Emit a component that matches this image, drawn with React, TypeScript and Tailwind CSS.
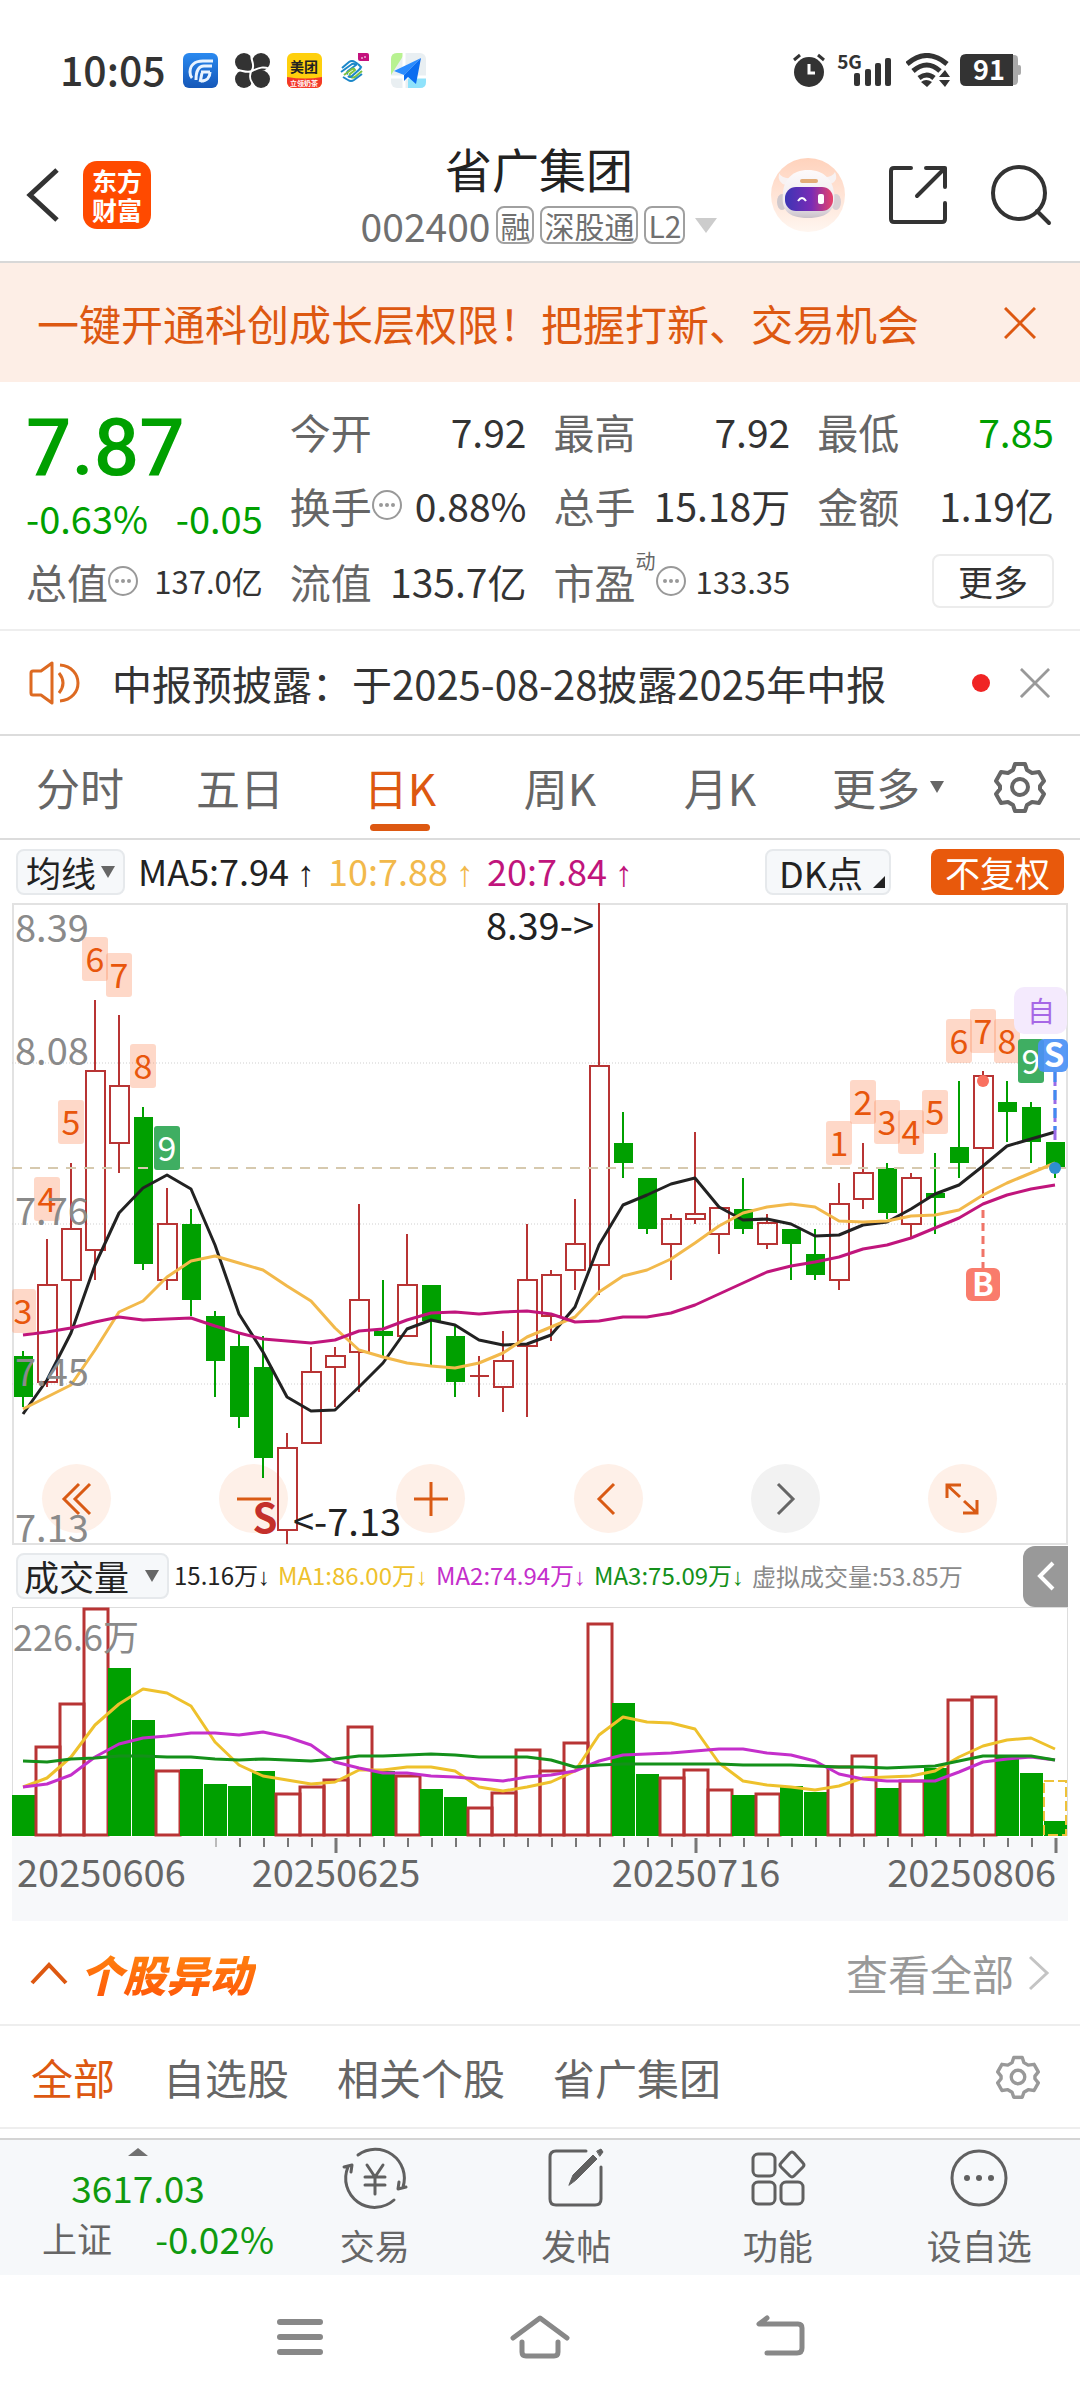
import React from "react";

type Candle = { up: boolean; high: number; top: number; bottom: number; low: number; vol: number };

const FIRST_X = 23;
const STEP = 24;
const RED = "#b83434";
const GREEN = "#00a000";

const cx = (i: number) => FIRST_X + STEP * i;

// [direction, high, body top, body bottom, low, volume top]
const rows: [number, number, number, number, number, number][] = [
  [0, 1351, 1356, 1397, 1407, 1796],
  [1, 1239, 1285, 1382, 1387, 1747],
  [1, 1163, 1229, 1280, 1330, 1704],
  [1, 1000, 1071, 1250, 1280, 1609],
  [1, 1015, 1086, 1143, 1173, 1669],
  [0, 1107, 1117, 1264, 1270, 1721],
  [1, 1188, 1224, 1280, 1290, 1771],
  [0, 1209, 1224, 1300, 1316, 1770],
  [0, 1311, 1316, 1361, 1397, 1785],
  [0, 1333, 1346, 1417, 1428, 1787],
  [0, 1336, 1367, 1458, 1478, 1772],
  [1, 1433, 1448, 1530, 1544, 1794],
  [1, 1347, 1372, 1443, 1443, 1787],
  [1, 1347, 1356, 1367, 1407, 1780],
  [1, 1204, 1300, 1352, 1392, 1727],
  [0, 1280, 1331, 1336, 1356, 1772],
  [1, 1234, 1285, 1336, 1336, 1776],
  [0, 1285, 1285, 1321, 1365, 1790],
  [0, 1325, 1336, 1382, 1397, 1798],
  [1, 1356, 1376, 1376, 1397, 1808],
  [1, 1331, 1361, 1387, 1412, 1793],
  [1, 1224, 1280, 1346, 1417, 1750],
  [1, 1270, 1275, 1316, 1341, 1771],
  [1, 1199, 1244, 1270, 1290, 1743],
  [1, 903, 1066, 1265, 1295, 1624],
  [0, 1112, 1143, 1163, 1178, 1704],
  [0, 1178, 1178, 1229, 1234, 1775],
  [1, 1214, 1219, 1244, 1280, 1778],
  [1, 1132, 1214, 1219, 1224, 1770],
  [1, 1208, 1208, 1234, 1254, 1790],
  [0, 1178, 1209, 1229, 1234, 1796],
  [1, 1214, 1223, 1244, 1249, 1794],
  [0, 1229, 1229, 1244, 1280, 1787],
  [0, 1229, 1254, 1275, 1280, 1793],
  [1, 1183, 1204, 1280, 1290, 1767],
  [1, 1143, 1173, 1199, 1209, 1756],
  [0, 1163, 1168, 1213, 1219, 1789],
  [1, 1173, 1178, 1224, 1237, 1781],
  [0, 1153, 1193, 1198, 1234, 1769],
  [0, 1081, 1147, 1163, 1178, 1700],
  [1, 1071, 1076, 1148, 1198, 1697],
  [0, 1081, 1102, 1112, 1142, 1758],
  [0, 1102, 1107, 1142, 1163, 1774],
  [0, 1142, 1142, 1167, 1178, 1822],
];

const candles: Candle[] = rows.map(([d, high, top, bottom, low, vol]) => ({ up: d === 1, high, top, bottom, low, vol }));

// Days whose volume bar takes the opposite colour of the price candle.
const flippedVolume = new Set([4, 39]);

const ma5 = [1414, 1380, 1333, 1265, 1213, 1188, 1175, 1189, 1245, 1314, 1352, 1397, 1411, 1410, 1387, 1363, 1329, 1320, 1325, 1340, 1345, 1344, 1335, 1307, 1245, 1205, 1195, 1184, 1178, 1207, 1220, 1219, 1224, 1236, 1235, 1225, 1222, 1209, 1194, 1185, 1166, 1146, 1139, 1132];
const ma10 = [1409, 1397, 1385, 1350, 1312, 1301, 1277, 1261, 1256, 1263, 1270, 1286, 1301, 1328, 1350, 1357, 1363, 1366, 1368, 1363, 1353, 1337, 1327, 1317, 1292, 1276, 1270, 1259, 1243, 1226, 1213, 1207, 1204, 1207, 1221, 1222, 1221, 1216, 1215, 1210, 1195, 1183, 1173, 1163];
const ma20 = [1335, 1332, 1328, 1322, 1317, 1320, 1319, 1318, 1326, 1333, 1339, 1341, 1343, 1340, 1331, 1329, 1320, 1313, 1312, 1314, 1312, 1311, 1314, 1322, 1321, 1317, 1317, 1313, 1305, 1294, 1283, 1272, 1266, 1262, 1257, 1249, 1245, 1238, 1228, 1218, 1204, 1195, 1189, 1185];
const vma1 = [1788, 1779, 1758, 1726, 1705, 1690, 1694, 1707, 1743, 1766, 1777, 1781, 1785, 1783, 1771, 1771, 1768, 1768, 1772, 1788, 1792, 1788, 1783, 1772, 1736, 1718, 1723, 1724, 1730, 1764, 1782, 1786, 1788, 1791, 1787, 1779, 1778, 1777, 1772, 1758, 1747, 1741, 1739, 1750];
const vma2 = [1788, 1785, 1776, 1758, 1745, 1739, 1737, 1734, 1734, 1736, 1733, 1738, 1746, 1763, 1769, 1774, 1774, 1777, 1778, 1780, 1782, 1778, 1776, 1772, 1762, 1756, 1755, 1754, 1752, 1750, 1750, 1754, 1756, 1762, 1775, 1780, 1782, 1782, 1782, 1773, 1763, 1760, 1758, 1761];
const vma3 = [1762, 1763, 1760, 1759, 1757, 1757, 1758, 1758, 1760, 1761, 1760, 1761, 1762, 1760, 1757, 1757, 1756, 1755, 1756, 1758, 1758, 1758, 1761, 1768, 1766, 1765, 1765, 1765, 1765, 1765, 1766, 1766, 1766, 1767, 1768, 1768, 1769, 1768, 1767, 1762, 1757, 1757, 1757, 1761];

const toPoints = (ys: number[]) => ys.map((y, i) => `${cx(i)},${y}`).join(" ");

const marks: [number, string, number][] = [
  [0, "3", 1289], [1, "4", 1177], [2, "5", 1100], [3, "6", 937], [4, "7", 953], [5, "8", 1044], [6, "9", 1126],
  [34, "1", 1121], [35, "2", 1080], [36, "3", 1100], [37, "4", 1110], [38, "5", 1090], [39, "6", 1019], [40, "7", 1009], [41, "8", 1019], [42, "9", 1039],
];

function PriceChart() {
  return (
    <svg viewBox="12 903 1056 642" className="pointer-events-none relative block h-auto w-full overflow-visible" role="img" aria-label="日K线图">
      {[1063, 1224, 1384].map((y) => (
        <line key={y} x1="12" x2="1068" y1={y} y2={y} stroke="#cfcfcf" strokeWidth="1" strokeDasharray="1 2" />
      ))}
      {candles.map((c, i) => {
        const x = cx(i);
        const col = c.up ? RED : GREEN;
        return (
          <g key={i} stroke={col} strokeWidth="2">
            {c.high < c.top && <line x1={x} x2={x} y1={c.high} y2={c.top} />}
            {c.low > c.bottom && <line x1={x} x2={x} y1={c.bottom} y2={c.low} />}
            {c.up ? (
              c.top === c.bottom ? <line x1={x - 9} x2={x + 10} y1={c.top} y2={c.top} /> : <rect x={x - 9} y={c.top} width="19" height={c.bottom - c.top} fill="none" />
            ) : (
              <rect x={x - 9} y={c.top} width="19" height={c.bottom - c.top} fill={col} stroke="none" />
            )}
          </g>
        );
      })}
      <line x1="12" x2="1068" y1="1168" y2="1168" stroke="#d6c9ae" strokeWidth="2" strokeDasharray="10 8" />
      <g fill="none" strokeWidth="3" strokeLinejoin="round">
        <polyline points={toPoints(ma5)} stroke="#222222" />
        <polyline points={toPoints(ma10)} stroke="#f2b94b" />
        <polyline points={toPoints(ma20)} stroke="#c0157c" />
      </g>
      <g textAnchor="middle">
        {marks.map(([i, t, y]) => (
          <g key={`${i}-${t}`}>
            <rect x={Math.max(12, cx(i) - 13)} y={y} width={i === 0 ? 24 : 26} height="44" rx="3" fill={t === "9" ? "#3fae62" : "#fb8a58"} fillOpacity={t === "9" ? 1 : 0.33} />
            <text x={cx(i)} y={y + 35} fill={t === "9" ? "#ffffff" : "#e8560c"} fontSize="34">{t}</text>
          </g>
        ))}
      </g>
      <rect x="1014" y="987" width="53" height="47" rx="10" fill="#f4eafd" />
      <text x="1041" y="1022" fontSize="28" textAnchor="middle" fill="#a768e6">自</text>
      <line x1="1055" x2="1055" y1="1072" y2="1142" stroke="#9a6be8" strokeWidth="3" strokeDasharray="14 4" />
      <line x1="1055" x2="1055" y1="1072" y2="1130" stroke="#3f8cf0" strokeWidth="3" strokeDasharray="10 8" />
      <rect x="1038" y="1039" width="30" height="33" rx="6" fill="#4a90f5" fillOpacity="0.92" />
      <text x="1054" y="1067" fontSize="33" fontWeight="700" textAnchor="middle" fill="#ffffff">S</text>
      <circle cx="1055" cy="1168" r="6" fill="#2f8fd0" />
      <circle cx="983" cy="1081" r="6" fill="#f9705f" />
      <line x1="983" x2="983" y1="1210" y2="1268" stroke="#f07468" strokeWidth="3" strokeDasharray="8 5" />
      <rect x="966" y="1268" width="34" height="33" rx="6" fill="#f97c6c" />
      <text x="983" y="1296" fontSize="32" fontWeight="700" textAnchor="middle" fill="#ffffff">B</text>
      <g fontSize="38" fill="#8a8a8a">
        <text x="15" y="942">8.39</text>
        <text x="15" y="1065">8.08</text>
        <text x="15" y="1225">7.76</text>
        <text x="15" y="1386">7.45</text>
        <text x="15" y="1542">7.13</text>
      </g>
      <g fontSize="38" fill="#222222">
        <text x="594" y="940" textAnchor="end">8.39-&gt;</text>
        <text x="293" y="1536">&lt;-7.13</text>
      </g>
      <text x="265" y="1533" fontSize="40" fontWeight="700" textAnchor="middle" fill="#c4302b">S</text>
    </svg>
  );
}

function VolumeChart() {
  const BASE = 1836;
  return (
    <svg viewBox="12 1608 1056 314" className="block h-auto w-full" role="img" aria-label="成交量图">
      <rect x="12" y="1838" width="1056" height="84" fill="#f7f8fa" />
      <path d="M12 1837V1608H1068V1837" fill="none" stroke="#dddddd" strokeWidth="2" />
      {candles.map((c, i) => {
        const up = flippedVolume.has(i) ? !c.up : c.up;
        const x = cx(i);
        return up ? (
          <rect key={i} x={x - 11} y={c.vol + 1} width="24" height={BASE - 1 - c.vol} fill="none" stroke={RED} strokeWidth="3" />
        ) : (
          <rect key={i} x={x - 11} y={c.vol} width="23" height={BASE + 1 - c.vol} fill={GREEN} />
        );
      })}
      <rect x="1044" y="1782" width="22" height="54" fill="none" stroke="#eec23a" strokeWidth="2" strokeDasharray="10 4" />
      <text x="13" y="1652" fontSize="36" fill="#8a8a8a">226.6万</text>
      <g fill="none" strokeWidth="3" strokeLinejoin="round">
        <polyline points={toPoints(vma1)} stroke="#eec12c" />
        <polyline points={toPoints(vma2)} stroke="#c42fcb" />
        <polyline points={toPoints(vma3)} stroke="#14901a" />
      </g>
      {candles.map((_, i) => {
        if (i < 8) return null;
        const major = i === 13 || i === 28 || i === 43;
        return <line key={i} x1={cx(i) + 1} x2={cx(i) + 1} y1="1839" y2={major ? 1854 : 1848} stroke={i === 8 ? "#bbbbbb" : "#777777"} strokeWidth={major ? 3 : 2} />;
      })}
      <g fontSize="38" fill="#666666">
        <text x="17" y="1888">20250606</text>
        <text x="336" y="1888" textAnchor="middle">20250625</text>
        <text x="696" y="1888" textAnchor="middle">20250716</text>
        <text x="1056" y="1888" textAnchor="end">20250806</text>
      </g>
    </svg>
  );
}

function StatusBar() {
  return (
    <div className="flex items-center justify-between pt-[49px] pr-[58px] pl-[60px] text-[#333333]">
      <div className="flex items-center gap-[17px]">
        <span className="pb-1 text-[41px] leading-[38px] font-medium">10:05</span>
        <svg viewBox="0 0 35 35" className="size-[35px]">
          <defs>
            <linearGradient id="gf" x1="0" y1="0" x2="0" y2="1"><stop stopColor="#2b8af0" /><stop offset="1" stopColor="#1557b8" /></linearGradient>
          </defs>
          <rect width="35" height="35" rx="6" fill="url(#gf)" />
          <g fill="none" stroke="#e9f4ff">
            <path d="M30 8H20C11 8 7 13 7 19c0 3 1 5 2 6" strokeWidth="3" />
            <path d="M29 13H21c-6 0-8 5-8 14M27 19H18M19 20c-1 4-1 6-2 9" strokeWidth="3" />
            <path d="M27 19c0 5-3 9-9 9" strokeWidth="3" />
          </g>
        </svg>
        <svg viewBox="0 0 35 35" className="size-[35px]" fill="#333333">
          <circle cx="9" cy="9" r="9" /><circle cx="26" cy="9" r="9" /><circle cx="9" cy="26" r="9" /><circle cx="26" cy="26" r="9" />
          <rect x="9" y="9" width="17" height="17" />
          <path d="M0 18c5-3 10 3 17 0s10-5 18-2M17 0c-3 6 4 11 0 17s-1 13 4 18" fill="none" stroke="#fff" strokeWidth="2" />
        </svg>
        <svg viewBox="0 0 35 35" className="size-[35px] overflow-visible">
          <defs><clipPath id="mt"><rect width="35" height="35" rx="6" /></clipPath></defs>
          <g clipPath="url(#mt)">
            <rect width="35" height="35" fill="#ffd00d" />
            <path d="M0 24Q18 27 35 24V35H0z" fill="#f3382a" />
          </g>
          <text x="17" y="19" fontSize="14" fontWeight="700" textAnchor="middle" fill="#222">美团</text>
          <text x="17" y="33" fontSize="7" fontWeight="700" textAnchor="middle" fill="#fff">立领奶茶</text>
        </svg>
        <svg viewBox="0 0 35 35" className="size-[35px]" fill="none" strokeWidth="2">
          <path d="M3 15 10 9q3-2 6 0l3 2M2 19l11-8q2-1 4 1l-8 6q-2 2 0 3" stroke="#1b87c9" />
          <path d="M5 22l8-6q2-1 3 1l-5 4q-1 2 1 3t4 0l7-6" stroke="#7cc242" />
          <path d="M4 24l5 3q3 2 6 0l8-6M22 15l-9 8q-2 2-4 0M19 11l3 3-3 4" stroke="#1b87c9" />
          <path d="M19 0h9q2 0 2 2v6h-9q-2 0-2-2z" fill="#c4117d" />
          <path d="M22 5h2M26 3v2" stroke="#fff" strokeWidth="1" />
        </svg>
        <svg viewBox="0 0 35 35" className="size-[35px]">
          <rect width="35" height="35" rx="6" fill="#e9eff2" />
          <path d="M0 22V6q0-6 6-6h8z" fill="#b8f291" />
          <path d="M17 25h18v4q0 6-6 6H17z" fill="#8fe2fb" />
          <path d="M13 0v35M0 24h35" stroke="#fff" strokeWidth="3" />
          <path d="M30 5 3 18l10 4z" fill="#2b8cff" /><path d="M30 5 13 22l0 6 4-4 8 7z" fill="#0b6df0" />
        </svg>
      </div>
      <div className="flex items-center">
        <svg viewBox="0 0 34 34" className="size-[34px]">
          <circle cx="17" cy="19" r="15" fill="#333" />
          <path d="M2 7l6-5M32 7l-6-5" stroke="#333" strokeWidth="3" />
          <path d="M17 11v9h6" fill="none" stroke="#fff" strokeWidth="3" />
        </svg>
        <span className="mb-5 ml-[11px] text-[19px] leading-none font-bold">5G</span>
        <svg viewBox="0 0 38 34" className="-ml-2 h-[34px] w-[38px]" fill="#333">
          <rect x="0" y="20" width="6" height="13" rx="2" /><rect x="11" y="16" width="6" height="17" rx="2" /><rect x="21" y="10" width="6" height="23" rx="2" /><rect x="31" y="5" width="6" height="28" rx="2" />
        </svg>
        <svg viewBox="0 0 44 34" className="ml-[14px] h-[34px] w-[44px]">
          <path d="M1 11q20-17 40 0M7 18q14-12 27 0M13 25q8-6 15 0" fill="none" stroke="#333" strokeWidth="5" />
          <path d="M15 29q5-4 11 0l-5 5zM33 24l6-7 5 7zM33 27h11l-5 7z" fill="#333" />
        </svg>
        <svg viewBox="0 0 62 32" className="ml-[10px] h-[32px] w-[62px] overflow-visible">
          <path d="M50 1h4q4 0 4 4v22q0 4-4 4h-4z" fill="#aaa" /><rect x="57" y="11" width="4" height="10" rx="2" fill="#aaa" />
          <path d="M6 0H53V32H6Q0 32 0 26V6Q0 0 6 0z" fill="#333" />
          <text x="29" y="26" fontSize="27" fontWeight="700" textAnchor="middle" fill="#fff">91</text>
        </svg>
      </div>
    </div>
  );
}

function Header() {
  return (
    <header className="flex items-center justify-between border-b-2 border-[#d8d8d8] pt-[47px] pr-[28px] pb-[9px] pl-[26px]">
      <div className="flex flex-1 items-center gap-[23px]">
        <button aria-label="返回">
          <svg viewBox="0 0 34 56" className="h-[56px] w-[34px]"><path d="M31 3 4 28 31 53" fill="none" stroke="#333" strokeWidth="5" /></svg>
        </button>
        <div className="flex size-[68px] flex-col items-center justify-center rounded-[14px] bg-[#ff4a00] text-[25px] leading-[29px] font-bold text-white">
          <span>东方</span>
          <span>财富</span>
        </div>
      </div>
      <div className="flex flex-col items-center">
        <h1 className="text-[47px] leading-[60px] text-[#222222]">省广集团</h1>
        <div className="flex items-center gap-[6px] text-[30px] leading-[34px] text-[#707070]">
          <span className="text-[39px] leading-[54px]">002400</span>
          <span className="rounded-lg border-2 border-[#a0a0a0] px-0.5">融</span>
          <span className="rounded-lg border-2 border-[#a0a0a0] px-0.5">深股通</span>
          <span className="rounded-lg border-2 border-[#a0a0a0] px-0.5">L2</span>
          <svg viewBox="0 0 22 15" className="ml-1 h-[15px] w-[22px]"><path d="M0 0h22L11 15z" fill="#cccccc" /></svg>
        </div>
      </div>
      <div className="flex flex-1 items-center justify-end gap-[42px]">
        <svg viewBox="0 0 76 76" className="size-[76px]">
          <defs>
            <linearGradient id="halo" x1="0" y1="0" x2="0" y2="1"><stop stopColor="#ffd2bc" /><stop offset="1" stopColor="#fff6f0" /></linearGradient>
            <linearGradient id="visor"><stop stopColor="#3b35b5" /><stop offset=".55" stopColor="#7a2bb5" /><stop offset="1" stopColor="#e8436a" /></linearGradient>
            <linearGradient id="shell" x1="0" y1="0" x2="0" y2="1"><stop stopColor="#fdfafa" /><stop offset=".7" stopColor="#efeaee" /><stop offset="1" stopColor="#c9c1c9" /></linearGradient>
          </defs>
          <circle cx="38" cy="38" r="37" fill="url(#halo)" />
          <ellipse cx="12" cy="45" rx="5" ry="8" fill="#cfc8cc" /><ellipse cx="66" cy="45" rx="5" ry="8" fill="#d8d0d4" />
          <path d="M16 28q-9-2-7-12 3 6 12 5zM60 27q9-3 5-12-3 6-12 5z" fill="#f8f2f2" />
          <path d="M38 13C22 13 14 23 13 36c-2 16 4 25 25 25s28-9 26-25C63 23 54 13 38 13z" fill="url(#shell)" />
          <rect x="30" y="22" width="18" height="4" rx="2" fill="#e3ad78" />
          <rect x="15" y="30" width="48" height="24" rx="11" fill="url(#visor)" />
          <path d="M28 44q4-6 8 0" fill="none" stroke="#fff" strokeWidth="2" /><rect x="48" y="37" width="6" height="10" rx="2" fill="#fff" />
        </svg>
        <button aria-label="分享">
          <svg viewBox="0 0 60 60" className="size-[60px]" fill="none" stroke="#333" strokeWidth="4" strokeLinecap="round" strokeLinejoin="round">
            <path d="M23 3H6Q3 3 3 6V54q0 3 3 3H54q3 0 3-3V38M38 3H57V22M57 3 29 31" />
          </svg>
        </button>
        <button aria-label="搜索">
          <svg viewBox="0 0 62 62" className="size-[62px]" fill="none" stroke="#333" strokeWidth="4" strokeLinecap="round"><circle cx="29" cy="29" r="26" /><path d="M47 47 59 59" /></svg>
        </button>
      </div>
    </header>
  );
}

function InfoDots() {
  return (
    <svg viewBox="0 0 30 30" className="size-[30px] shrink-0">
      <circle cx="15" cy="15" r="14" fill="none" stroke="#999" strokeWidth="2" />
      <circle cx="9" cy="15" r="2" fill="#999" /><circle cx="15" cy="15" r="2" fill="#999" /><circle cx="21" cy="15" r="2" fill="#999" />
    </svg>
  );
}

function Quote({ label, value, info, sup, small, green }: { label: string; value: string; info?: boolean; sup?: string; small?: boolean; green?: boolean }) {
  return (
    <div className="flex items-center justify-between whitespace-nowrap">
      <dt className="flex items-center text-[41px] leading-[50px] text-[#666666]">
        {label}
        {sup && <sup className="-top-5 text-[20px] leading-none">{sup}</sup>}
        {info && <InfoDots />}
      </dt>
      <dd className={`${small ? "text-[31px]" : "text-[39px]"} leading-[50px] ${green ? "text-[#00a000]" : "text-[#333333]"}`}>{value}</dd>
    </div>
  );
}

function Gear({ color, className }: { color: string; className: string }) {
  return (
    <svg viewBox="0 0 52 52" className={className} fill="none" stroke={color} strokeWidth="4" strokeLinejoin="round">
      <path d="M21 3h10l2 6 5 3 7-1 5 9-4 5v3l4 5-5 9-7-1-5 3-2 6H21l-2-6-5-3-7 1-5-9 4-5v-3l-4-5 5-9 7 1 5-3z" />
      <circle cx="26" cy="26" r="8" />
    </svg>
  );
}

const Down = ({ className }: { className: string }) => (
  <svg viewBox="0 0 14 12" className={className}><path d="M0 0h14L7 12z" fill="#666666" /></svg>
);

const Arrow = ({ down }: { down?: boolean }) => (
  <span className={`font-['Liberation_Sans'] ${down ? "" : "ml-2"}`}>{down ? "↓" : "↑"}</span>
);

const Cross = ({ className, color }: { className: string; color: string }) => (
  <svg viewBox="0 0 32 32" className={className}><path d="M1 1 31 31M31 1 1 31" stroke={color} strokeWidth="3" /></svg>
);

const controls = [
  { label: "最早", d: "M19 2 4 17l15 15M30 2 15 17l15 15" },
  { label: "缩小", d: "M0 17h34" },
  { label: "放大", d: "M0 17h34M17 0v34" },
  { label: "向左", d: "M23 2 8 17l15 15" },
  { label: "向右", d: "M10 2 25 17 10 32", muted: true },
  { label: "全屏", d: "M2 16V3H16M2 3 15 15M32 18V31H18M32 31 19 19" },
];

function ChartButtons() {
  return (
    <div className="absolute inset-x-0 bottom-3 flex justify-between pr-[71px] pl-[30px]">
      {controls.map(({ label, d, muted }) => (
        <button key={label} aria-label={label} className={`flex size-[69px] items-center justify-center rounded-full ${muted ? "bg-[#f2f2f2]" : "bg-[#fef0e8]"}`}>
          <svg viewBox="0 0 34 34" className="size-[34px]" fill="none" stroke={muted ? "#666666" : "#d95a14"} strokeWidth="3"><path d={d} /></svg>
        </button>
      ))}
    </div>
  );
}

const tabs = ["分时", "五日", "日K", "周K", "月K"];
const filters = ["全部", "自选股", "相关个股", "省广集团"];

function BottomItem({ label, children }: { label: string; children: React.ReactNode }) {
  return (
    <button className="flex flex-1 flex-col items-center gap-[10px] pt-2 text-[35px] leading-[54px] text-[#666666]">
      <svg viewBox="0 0 64 60" className="h-[60px] w-[64px] overflow-visible" fill="none" stroke="#606060" strokeWidth="3" strokeLinecap="round" strokeLinejoin="round">{children}</svg>
      <span>{label}</span>
    </button>
  );
}

export default function App() {
  return (
    <div className="flex min-h-screen flex-col bg-white font-['Noto_Sans_CJK_SC',sans-serif]">
      <StatusBar />
      <Header />

      <div className="flex min-h-[119px] items-center justify-between bg-[#fdeee6] pr-[44px] pl-[37px]">
        <a href="#open" className="text-[42px] leading-[60px] text-[#dd5811]">一键开通科创成长层权限！把握打新、交易机会</a>
        <button aria-label="关闭横幅"><Cross className="size-[32px]" color="#dd5811" /></button>
      </div>

      <section className="grid grid-cols-4 gap-x-[27px] border-b-2 border-[#eeeeee] px-[26px] pt-[24px] pb-[21px]">
        <div className="flex flex-col text-[#00a000]">
          <span className="font-['Roboto'] text-[80px] leading-[84px] font-medium">7.87</span>
          <div className="flex justify-between text-[38px] leading-[56px]"><span>-0.63%</span><span>-0.05</span></div>
        </div>
        <dl className="col-span-3 grid grid-cols-3 gap-x-[27px] gap-y-[24px] pb-[24px]">
          <Quote label="今开" value="7.92" />
          <Quote label="最高" value="7.92" />
          <Quote label="最低" value="7.85" green />
          <Quote label="换手" value="0.88%" info />
          <Quote label="总手" value="15.18万" />
          <Quote label="金额" value="1.19亿" />
        </dl>
        <dl className="col-span-3 grid grid-cols-3 items-center gap-x-[27px]">
          <Quote label="总值" value="137.0亿" info small />
          <Quote label="流值" value="135.7亿" />
          <Quote label="市盈" value="133.35" info sup="动" small />
        </dl>
        <div className="flex justify-end">
          <button className="rounded-lg border-2 border-[#ececec] px-[24px] text-[35px] leading-[50px] text-[#333333]">更多</button>
        </div>
      </section>

      <section className="flex min-h-[105px] items-center border-b-2 border-[#dcdcdc] pr-[30px] pl-[28px]">
        <svg viewBox="0 0 54 44" className="h-[44px] w-[54px]" fill="none" stroke="#dd6a22" strokeWidth="3" strokeLinejoin="round">
          <path d="M3 12q0-2 2-2h8L24 2V42L13 34H5q-2 0-2-2zM31 12q8 10 0 20M32 4c24 2 24 34 0 36" />
        </svg>
        <a href="#notice" className="ml-[30px] flex-1 text-[40px] leading-[56px] whitespace-nowrap text-[#333333]">中报预披露：于2025-08-28披露2025年中报</a>
        <span className="mr-[30px] size-[18px] rounded-full bg-[#f02424]" />
        <button aria-label="关闭公告"><Cross className="size-[30px]" color="#999999" /></button>
      </section>

      <nav className="flex min-h-[104px] items-stretch border-b-2 border-[#dcdcdc] text-[44px] text-[#666666]">
        {tabs.map((t) => (
          <button key={t} className={`relative flex-[4] ${t === "日K" ? "text-[#dd5811]" : ""}`}>
            {t}
            {t === "日K" && <span className="absolute bottom-[7px] left-1/2 h-[7px] w-[60px] -translate-x-1/2 rounded-full bg-[#dd5811]" />}
          </button>
        ))}
        <button className="flex-[4]">
          <span className="flex items-center justify-center gap-[10px] pl-4">更多<Down className="h-[12px] w-[14px]" /></span>
        </button>
        <button aria-label="图表设置" className="flex flex-[3] items-center justify-center"><Gear color="#666666" className="size-[52px]" /></button>
      </nav>

      <div className="flex min-h-[63px] items-center justify-between px-[16px] text-[36px] leading-[44px] whitespace-nowrap text-[#222222]">
        <div className="flex items-center gap-[13px]">
          <button className="flex items-center gap-[5px] rounded-lg border-2 border-[#e6e9ec] bg-[#f6f8fa] px-[8px] text-[35px] leading-[42px]">均线<Down className="h-[12px] w-[14px]" /></button>
          <span>MA5:7.94<Arrow /></span>
          <span className="text-[#f2b94b]">10:7.88<Arrow /></span>
          <span className="text-[#c0157c]">20:7.84<Arrow /></span>
        </div>
        <div className="flex items-center gap-[40px]">
          <button className="flex items-end gap-[10px] rounded-lg border-2 border-[#e6e9ec] bg-[#f6f8fa] pr-[4px] pl-[12px] leading-[42px]">DK点
            <svg viewBox="0 0 12 12" className="mb-[5px] size-[12px]"><path d="M12 0V12H0z" fill="#222" /></svg>
          </button>
          <button className="rounded-lg bg-[#e8590c] px-[14px] text-[35px] leading-[46px] text-white">不复权</button>
        </div>
      </div>

      <div className="mx-[12px]">
        <div className="relative shadow-[inset_0_0_0_2px_#e2e2e2]">
          <ChartButtons />
          <PriceChart />
        </div>
        <div className="flex min-h-[62px] items-center pl-[4px] text-[24px] whitespace-nowrap">
          <button className="flex items-center gap-[16px] rounded-lg border-2 border-[#e6e9ec] bg-[#f6f8fa] pr-[8px] pl-[6px] text-[35px] leading-[42px] text-[#222222]">成交量<Down className="h-[12px] w-[14px]" /></button>
          <div className="flex flex-1 items-center gap-[8px] pl-[5px]">
            <span className="text-[#222222]">15.16万<Arrow down /></span>
            <span className="text-[#eec12c]">MA1:86.00万<Arrow down /></span>
            <span className="text-[#c42fcb]">MA2:74.94万<Arrow down /></span>
            <span className="text-[#14901a]">MA3:75.09万<Arrow down /></span>
            <span className="text-[#8a8a8a]">虚拟成交量:53.85万</span>
          </div>
          <button aria-label="展开指标" className="flex h-[61px] w-[45px] items-center justify-center rounded-l-xl bg-[#999999]">
            <svg viewBox="0 0 18 30" className="h-[30px] w-[18px]"><path d="M16 2 3 15 16 28" fill="none" stroke="#fff" strokeWidth="4" /></svg>
          </button>
        </div>
        <VolumeChart />
      </div>

      <section className="flex min-h-[105px] items-center justify-between border-b-2 border-[#eeeeee] px-[30px]">
        <button className="flex items-center gap-[12px]">
          <svg viewBox="0 0 38 24" className="h-[24px] w-[38px]"><path d="M2 22 19 4 36 22" fill="none" stroke="#dd5811" strokeWidth="4" /></svg>
          <span className="bg-linear-to-b from-[#ff8a10] to-[#ff5208] bg-clip-text pr-1 text-[43px] leading-[60px] font-black text-transparent italic">个股异动</span>
        </button>
        <a href="#all" className="flex items-center gap-[14px] text-[42px] leading-[60px] text-[#999999]">查看全部
          <svg viewBox="0 0 22 36" className="h-[36px] w-[22px]"><path d="M2 2 19 18 2 34" fill="none" stroke="#c4c4c4" strokeWidth="3" /></svg>
        </a>
      </section>

      <section className="flex min-h-[103px] items-center justify-between border-b-2 border-[#eeeeee] pr-[40px] pl-[31px]">
        <div className="flex gap-[48px] text-[42px] leading-[60px] text-[#666666]">
          {filters.map((f, i) => (
            <button key={f} className={i === 0 ? "text-[#dd5811]" : ""}>{f}</button>
          ))}
        </div>
        <button aria-label="异动设置"><Gear color="#999999" className="size-[44px]" /></button>
      </section>

      <div className="mt-[9px] flex min-h-[137px] items-start border-t-2 border-[#d4d4d4] bg-[#f6f8fa]">
        <button className="flex w-[274px] shrink-0 flex-col items-center pt-[8px] pl-[42px] whitespace-nowrap">
          <svg viewBox="0 0 20 8" className="mr-[40px] h-[8px] w-[20px]"><path d="M10 0 20 8H0z" fill="#707070" /></svg>
          <span className="mr-[40px] pt-1 text-[37px] leading-[54px] text-[#0f9a0f]">3617.03</span>
          <span className="flex w-full justify-between text-[35px] leading-[48px] text-[#666666]">上证<span className="text-[37px] text-[#0f9a0f]">-0.02%</span></span>
        </button>
        <BottomItem label="交易">
          <path d="M15 7A29 29 0 0 1 60 39M51 52A29 29 0 0 1 5 19M1 19l8-2-1 7M63 39l-8 2 1-7M24 17l8 12 8-12M22 29h20M22 37h20M32 29v17" />
        </BottomItem>
        <BottomItem label="发帖">
          <path d="M42 3H12q-6 0-6 6V51q0 6 6 6H51q6 0 6-6V19" />
          <path d="M25 37l4-10L49 7l4 4-21 21zM53 3l4-2 2 3-3 4z" fill="#606060" strokeWidth="1" />
        </BottomItem>
        <BottomItem label="功能">
          <rect x="7" y="6" width="22" height="22" rx="5" /><path d="M44 5q2-2 4 0l9 10q2 2 0 4l-9 9q-2 2-4 0l-9-9q-2-2 0-4z" /><rect x="7" y="34" width="22" height="22" rx="5" /><rect x="35" y="34" width="22" height="22" rx="5" />
        </BottomItem>
        <BottomItem label="设自选">
          <circle cx="32" cy="30" r="27" /><g fill="#606060" stroke="none"><circle cx="20" cy="30" r="3" /><circle cx="32" cy="30" r="3" /><circle cx="44" cy="30" r="3" /></g>
        </BottomItem>
      </div>

      <nav className="grid min-h-[126px] flex-1 grid-cols-3 place-items-center px-[180px]">
        <button aria-label="最近任务">
          <svg viewBox="0 0 60 46" className="h-[46px] w-[60px]" stroke="#888" strokeWidth="6" strokeLinecap="round"><path d="M10 7H50M10 22H50M10 37H50" /></svg>
        </button>
        <button aria-label="主页">
          <svg viewBox="0 0 60 46" className="h-[46px] w-[60px]" fill="none" stroke="#888" strokeWidth="5" strokeLinecap="round" strokeLinejoin="round"><path d="M3 23 30 3 57 23M12 27V37q0 4 4 4H44q4 0 4-4V27" /></svg>
        </button>
        <button aria-label="返回上页">
          <svg viewBox="0 0 60 46" className="h-[46px] w-[60px]" fill="none" stroke="#888" strokeWidth="5" strokeLinecap="round" strokeLinejoin="round"><path d="M17 3 9 9H48q4 0 4 4V33q0 5-5 5H17" /></svg>
        </button>
      </nav>
    </div>
  );
}
